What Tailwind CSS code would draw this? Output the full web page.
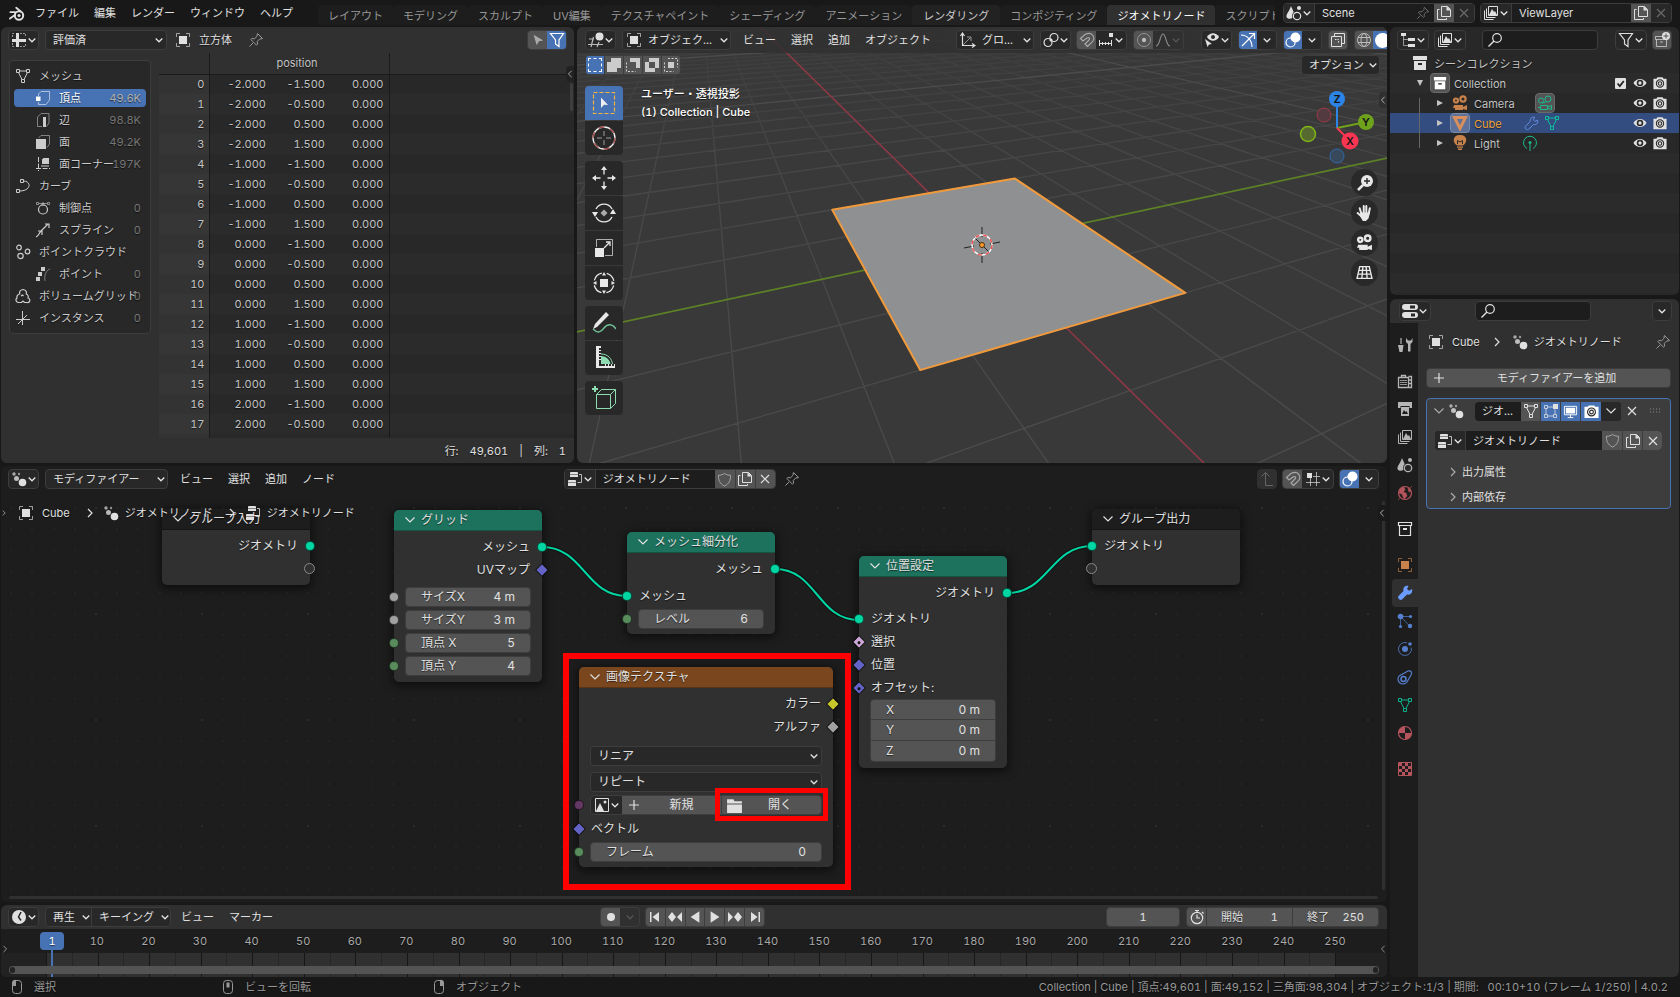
<!DOCTYPE html>
<html lang="ja">
<head>
    <meta charset="UTF-8">
    <meta name="viewport" content="width=device-width, initial-scale=1.0">
    <title>Blender - ジオメトリノード</title>
    <script src="https://cdn.jsdelivr.net/npm/@tailwindcss/browser@4"></script>
</head>
<body class="flex h-screen flex-col overflow-hidden bg-[#181818] font-['Inter','Noto_Sans_CJK_JP',sans-serif] text-[11px] leading-4 text-[#e0e0e0] tabular-nums [text-shadow:0_1px_1px_rgb(0_0_0/0.6)]">

<!-- Icon set -->
<svg class="hidden" fill="none" stroke="currentColor">
    <symbol id="i-blender" viewBox="0 0 16 16"><g fill="none" stroke="currentColor"><circle cx="10" cy="9.5" r="4.2" stroke-width="2"/><path d="M6 6.2h-4.6M11.5 5.2L7.2 1.8M6.2 8.8L1 12.6" stroke-width="1.8" stroke-linecap="round"/></g><circle cx="10" cy="9.5" r="1.6" fill="currentColor"/></symbol>
    <symbol id="i-chev" viewBox="0 0 10 10"><path d="M1.700 3.500L5 6.800l3.300-3.300" fill="none" stroke="currentColor" stroke-width="1.300"/></symbol>
    <symbol id="i-fold" viewBox="0 0 12 12"><path d="M1.500 3.500L6 8l4.500-4.500" fill="none" stroke="currentColor" stroke-width="1.200"/></symbol>
    <symbol id="i-right" viewBox="0 0 10 10"><path d="M3 1l4 4-4 4" fill="none" stroke="currentColor" stroke-width="1.200"/></symbol>
    <symbol id="i-left" viewBox="0 0 10 10"><path d="M7 1L3 5l4 4" fill="none" stroke="currentColor" stroke-width="1.200"/></symbol>
    <symbol id="i-close" viewBox="0 0 16 16"><path d="M4 4l8 8M12 4l-8 8" fill="none" stroke="currentColor" stroke-width="1.200"/></symbol>
    <symbol id="i-plus" viewBox="0 0 16 16"><path d="M8 3v10M3 8h10" fill="none" stroke="currentColor" stroke-width="1.200"/></symbol>
    <symbol id="i-object" viewBox="0 0 16 16"><path d="M1.500 5V1.500h3.500M11 1.500h3.500V5M14.500 11v3.500H11M5 14.500H1.500V11" fill="none" stroke="currentColor" opacity=".65"/><rect x="4" y="4" width="8" height="8" fill="currentColor"/></symbol>
    <symbol id="i-pin" viewBox="0 0 16 16"><path d="M9.500 1.500l5 5-1.500.5-1-.3-2.700 2.700.2 2.800-1 1-5.700-5.700 1-1 2.800.2L9.300 4l-.3-1zM5 11l-3.500 3.500" fill="none" stroke="currentColor"/></symbol>
    <symbol id="i-copy" viewBox="0 0 16 16"><path d="M5.500 1.500h6l3 3v7h-9zM3.500 4.500h-2v10h9v-1.500" fill="none" stroke="currentColor"/><path d="M10.500 1v4.500H15z" fill="currentColor"/></symbol>
    <symbol id="i-mesh" viewBox="0 0 16 16"><path d="M1.500 1.500h3v3h-3zM11.500 1.500h3v3h-3zM6.500 11.500h3v3h-3zM4.500 3h7M3.500 4.500l3.500 7M12.500 4.500L9 11.500" fill="none" stroke="currentColor"/></symbol>
    <symbol id="i-vert" viewBox="0 0 16 16"><path d="M3.500 6V4l2.500-2.500h8.500V10l-3.500 4.500H3.500V12" fill="none" stroke="currentColor" opacity=".55"/><rect x="1" y="6.500" width="4.500" height="4.500" fill="currentColor"/></symbol>
    <symbol id="i-edge" viewBox="0 0 16 16"><path d="M7 14.500H2.500V5L6 1.500h8V11l-2.500 3.500" fill="none" stroke="currentColor" opacity=".55"/><rect x="8" y="5" width="3" height="10" fill="currentColor"/></symbol>
    <symbol id="i-face" viewBox="0 0 16 16"><path d="M3.500 4L6 1.500h8.500V10L12 13.500" fill="none" stroke="currentColor" opacity=".55"/><rect x="1" y="5" width="10" height="10" fill="currentColor"/></symbol>
    <symbol id="i-corner" viewBox="0 0 16 16"><path d="M3.500 1v14M1 12.500h14" fill="none" stroke="currentColor" stroke-dasharray="5 1.500"/><path d="M7 8V3.500L8.500 2H14v6z" fill="currentColor"/><path d="M6 10h8" stroke="currentColor"/></symbol>
    <symbol id="i-curve" viewBox="0 0 16 16"><path d="M5.500 1.500h3v3h-3zM1.500 11.500h3v3h-3zM8.500 3c8 0 8 10-4 10" fill="none" stroke="currentColor"/></symbol>
    <symbol id="i-ctrl" viewBox="0 0 16 16"><circle cx="8" cy="9.500" r="4.500" fill="none" stroke="currentColor" stroke-width="1.200"/><path d="M1.500 2.500h2v2h-2zM12.500 2.500h2v2h-2zM7 3h2v2H7zM4 3.500h8" fill="none" stroke="currentColor" opacity=".6"/></symbol>
    <symbol id="i-spline" viewBox="0 0 16 16"><path d="M1 15c3-1 3-4 5-6l7-7M10 2h4v4M3 9h4v4" fill="none" stroke="currentColor" stroke-width="1.200"/></symbol>
    <symbol id="i-cloud" viewBox="0 0 16 16"><g fill="none" stroke="currentColor" stroke-width="1.200"><circle cx="4" cy="3.500" r="2.300"/><circle cx="12.500" cy="7.500" r="2.300"/><circle cx="5.500" cy="12" r="2.700"/></g></symbol>
    <symbol id="i-points" viewBox="0 0 16 16"><path d="M6 1h4v4H6zM3 6h4v4H3zM1 11h4v4H1z" fill="currentColor"/><path d="M15 3c-4 1-6 7-5 12" fill="none" stroke="currentColor" opacity=".5"/></symbol>
    <symbol id="i-volume" viewBox="0 0 16 16"><path d="M8 1.500a3.500 3.500 0 0 1 3.300 4.500 3 3 0 0 1 1.700 4 2.300 2.300 0 0 1-1 4.500H9.500L8 13l-1.500 1.500H3.500a2.500 2.500 0 0 1-1.500-4.500 3.200 3.200 0 0 1 2.700-4A3.500 3.500 0 0 1 8 1.500zM6 8l1.500-1 1 1" fill="none" stroke="currentColor" stroke-width="1.200"/></symbol>
    <symbol id="i-axes" viewBox="0 0 16 16"><path d="M7.500 1v14M1 9.500h14M3 14l9-9" fill="none" stroke="currentColor"/></symbol>
    <symbol id="i-sheet" viewBox="0 0 16 16"><path d="M1 7h14v3H1z M5 1h3v14H5z" fill="currentColor"/><path d="M1.500 5V1.500H4M9 1.500h5.500V5M1.500 11v3.500H4M9 14.500h5.500V11" fill="none" stroke="currentColor" opacity=".6" stroke-dasharray="2 1"/></symbol>
    <symbol id="i-arrow" viewBox="0 0 16 16"><path d="M3 2l11 6.500-5 .8L6.500 14z" fill="currentColor"/></symbol>
    <symbol id="i-funnel" viewBox="0 0 16 16"><path d="M1.500 1.500h13L10 8v6.500L6.500 12V8z" fill="none" stroke="currentColor" stroke-width="1.200"/></symbol>
    <symbol id="i-search" viewBox="0 0 16 16"><circle cx="10" cy="6" r="4.300" fill="none" stroke="currentColor" stroke-width="1.200"/><path d="M7 9l-5.500 5.500" stroke="currentColor" stroke-width="1.400"/></symbol>
    <symbol id="i-view3d" viewBox="0 0 16 16"><circle cx="11.500" cy="4.500" r="4" fill="currentColor"/><path d="M1 7h5M0 12.500h15M5.500 5L3 15M11 10l-2 5" fill="none" stroke="currentColor" stroke-width="1.200" opacity=".8"/></symbol>
    <symbol id="i-orient" viewBox="0 0 16 16"><path d="M2.500 2v11.500H14M.5 4l2-3 2 3M12 11.500l3 2-3 2" fill="none" stroke="currentColor" stroke-width="1.200"/><path d="M3 13l7-7M7 5h4v4" fill="none" stroke="currentColor" opacity=".6"/></symbol>
    <symbol id="i-pivot" viewBox="0 0 16 16"><g fill="none" stroke="currentColor" stroke-width="1.200"><circle cx="5" cy="10.500" r="4"/><circle cx="11" cy="5.500" r="4"/></g><circle cx="8" cy="8" r="1.500" fill="currentColor"/></symbol>
    <symbol id="i-magnet" viewBox="0 0 16 16"><path d="M1.500 6.500L6 2.500c8-4 12 5 5.500 9l-3 3-2.500-2.500 3-3c3-2.500 1-4.500-1-3L4 9z" fill="none" stroke="currentColor" stroke-width="1.200"/></symbol>
    <symbol id="i-snapinc" viewBox="0 0 16 16"><path d="M1.500 8v6M4.500 10v3M7.500 10v3M10.500 10v3M13.500 8v6M1 11.500h13" fill="none" stroke="currentColor"/><path d="M11 1h4v4h-4z" fill="currentColor"/></symbol>
    <symbol id="i-prop" viewBox="0 0 16 16"><circle cx="8" cy="8" r="6.500" fill="none" stroke="currentColor" opacity=".6"/><circle cx="8" cy="8" r="2.200" fill="currentColor"/></symbol>
    <symbol id="i-falloff" viewBox="0 0 16 16"><path d="M1 14c4 0 4-12 7-12s3 12 7 12" fill="none" stroke="currentColor" stroke-width="1.200"/></symbol>
    <symbol id="i-eye" viewBox="0 0 16 16"><path d="M.5 8C4 1.800 12 1.800 15.500 8 12 14.200 4 14.200.5 8z" fill="currentColor"/><circle cx="8" cy="8" r="3.700" fill="#282828"/><circle cx="8" cy="8" r="1.900" fill="currentColor"/></symbol>
    <symbol id="i-visible" viewBox="0 0 16 16"><path d="M3 5c3-5 9-5 12 0-3 5-9 5-12 0z" fill="currentColor"/><circle cx="9" cy="5" r="2" fill="#282828"/><path d="M1 7l7 5-3 .5L3.500 15z" fill="currentColor"/></symbol>
    <symbol id="i-gizmo" viewBox="0 0 16 16"><path d="M1 3c6 0 11 5 11 12M2 14L14 2M9 1.500h5.500V7" fill="none" stroke="currentColor" stroke-width="1.200"/></symbol>
    <symbol id="i-overlay" viewBox="0 0 16 16"><circle cx="10.500" cy="5.500" r="5" fill="currentColor"/><circle cx="5.500" cy="10.500" r="4.500" fill="none" stroke="currentColor" stroke-width="1.200"/></symbol>
    <symbol id="i-xray" viewBox="0 0 16 16"><path d="M4.500 1.500h10v10h-3M1.500 4.500h10v10h-10zM4.500 4.500v-3" fill="none" stroke="currentColor"/><path d="M5 7.500h3.500V11" fill="none" stroke="currentColor" stroke-dasharray="1.500 1"/></symbol>
    <symbol id="i-globe" viewBox="0 0 16 16"><g fill="none" stroke="currentColor"><circle cx="8" cy="8" r="6.500"/><ellipse cx="8" cy="8" rx="3" ry="6.500"/><path d="M2 5.500h12M2 10.500h12"/></g></symbol>
    <symbol id="i-scene" viewBox="0 0 16 16"><path d="M5 1c1.500 4 4 7 3 10-.5 3-6.500 4-7.500 1C0 9 3.500 6 5 1z" fill="currentColor"/><circle cx="13" cy="3" r="2" fill="currentColor"/><circle cx="11" cy="11" r="5" fill="#282828"/><circle cx="11" cy="11" r="3.700" fill="none" stroke="currentColor" stroke-width="1.200"/></symbol>
    <symbol id="i-layers" viewBox="0 0 16 16"><path d="M5.500 1.500h9v9h-9zM3.500 3.500v9h9M1.500 5.500v9h9" fill="none" stroke="currentColor"/><path d="M6 10l3-6 2 3 1-1 2 4z" fill="currentColor"/></symbol>
    <symbol id="i-image" viewBox="0 0 16 16"><path d="M1.500 1.500h13v13h-13z" fill="none" stroke="currentColor"/><path d="M2 14l4-8 4 8z" fill="currentColor"/><circle cx="11" cy="5" r="1.500" fill="currentColor"/></symbol>
    <symbol id="i-tree" viewBox="0 0 16 16"><path d="M1 1h5v3H1zM8 6h7v3H8zM8 12h7v3H8z" fill="currentColor"/><path d="M3.500 4v9.500H8M3.500 7.500H8" fill="none" stroke="currentColor" opacity=".6"/></symbol>
    <symbol id="i-box" viewBox="0 0 16 16"><path d="M1 1h14v4H1zM2 6h12v9H2zM6 8v2h4V8z" fill="currentColor" fill-rule="evenodd"/></symbol>
    <symbol id="i-boxline" viewBox="0 0 16 16"><path d="M1.500 1.500h13v3h-13zM2.500 4.500h11v10h-11z" fill="none" stroke="currentColor" stroke-width="1.200"/><path d="M6 7h4v2H6z" fill="currentColor"/></symbol>
    <symbol id="i-newcol" viewBox="0 0 16 16"><path d="M8 4.500H1.500v3h12M2.500 7.500v7h10v-7M6 10h3" fill="none" stroke="currentColor" opacity=".7"/><circle cx="12" cy="4" r="4" fill="currentColor"/><path d="M12 1.500v5M9.500 4h5" stroke="#545454"/></symbol>
    <symbol id="i-camera" viewBox="0 0 16 16"><path d="M2 10h9v2l4-2v5l-4-1v1H3v-2H1z" fill="currentColor"/><g fill="none" stroke="currentColor" stroke-width="2.200"><circle cx="4" cy="5.500" r="2"/><circle cx="11" cy="4" r="2.600"/></g></symbol>
    <symbol id="i-cameraline" viewBox="0 0 16 16"><g fill="none" stroke="currentColor"><path d="M3.500 10.500h7v4h-7zM10.500 12l4-1.500v4l-4-1.500M1 12.500h2.500M5 8l4-1"/><circle cx="4" cy="5.500" r="2.500"/><circle cx="11" cy="4" r="3"/></g></symbol>
    <symbol id="i-cubeobj" viewBox="0 0 16 16"><path d="M2.500 2.500h11L8 13.500z" fill="none" stroke="currentColor" stroke-width="3"/></symbol>
    <symbol id="i-bulb" viewBox="0 0 16 16"><path d="M8 0C0 0 .5 8 5 10.500h6C15.500 8 16 0 8 0zM5 11.500h6v1.200H5zM6 13.500h4V15H6z" fill="currentColor"/><path d="M5.500 9V5.500L8 7l2.500-1.500V9" fill="none" stroke="#282828"/></symbol>
    <symbol id="i-lightdata" viewBox="0 0 16 16"><path d="M5 13.500a6.500 6.500 0 1 1 6 0M8 9v7" fill="none" stroke="currentColor"/><circle cx="8" cy="7.500" r="1.500" fill="currentColor"/></symbol>
    <symbol id="i-wrench" viewBox="0 0 16 16"><path d="M14.500 4.500l-2.800 1.300-1.700-1.700L11.300 1.300C8.500.5 6 2.800 6.700 5.900L1.500 11c-1.200 2 1.200 4.400 3.300 3.300l5.200-5.200c3 .7 5.600-1.600 4.500-4.600z" fill="none" stroke="currentColor"/></symbol>
    <symbol id="i-wrenchfill" viewBox="0 0 16 16"><path d="M15 4l-3 1.800L10 4l1.500-3C8 0 5.500 3 6.500 6L1.500 11c-1.500 2 1.500 5 3.500 3.500l5-5c3.500.8 6-2 5-5.500z" fill="currentColor"/></symbol>
    <symbol id="i-render" viewBox="0 0 16 16"><path d="M.5 3H4l1-1.500h6L12 3h3.500v12H.5z" fill="currentColor"/><circle cx="8" cy="8.500" r="4.200" fill="none" stroke="#282828" stroke-width="1.200"/><circle cx="8" cy="8.500" r="2" fill="none" stroke="#282828" stroke-width="1.200"/></symbol>
    <symbol id="i-tool" viewBox="0 0 16 16"><path d="M4 1v6" stroke="currentColor" stroke-width="1.200"/><path d="M1 8h5.500l-1 7h-3z" fill="currentColor"/><path d="M9 1v4l2 2v7.500h2.500V7l2-2V1l-1.500 2.500h-3z" fill="currentColor"/></symbol>
    <symbol id="i-back" viewBox="0 0 16 16"><path d="M1.500 4.500h10v10h-10zM4.500 4.500v-2h4v2M11.500 3.500h3v11h-3M11.500 7h3M11.500 10.500h3" fill="none" stroke="currentColor" stroke-width="1.300"/><path d="M3 7.500h7M3 9.500h7M3 11.500h7" stroke="currentColor" stroke-width=".8"/></symbol>
    <symbol id="i-printer" viewBox="0 0 16 16"><path d="M1 1h14v6h-2.500V5h-9v2H1zM4 6h8v9H4z" fill="currentColor"/><path d="M5 13l2-4 1.500 2 1-1L11 13z" fill="#1d1d1d"/></symbol>
    <symbol id="i-world" viewBox="0 0 16 16"><circle cx="8" cy="8" r="6.500" fill="none" stroke="currentColor" stroke-width="1.200"/><path d="M3 4l4-2 1 3-2 2 3 1 1 3-3 3-2-5-3-1zM11 3l3 3-2 1zM1 15l2-2M13 3l2-2" fill="currentColor" stroke="currentColor" stroke-width=".6"/></symbol>
    <symbol id="i-particle" viewBox="0 0 16 16"><path d="M3.500 4v9M5 3.500h8M5 5l8 8.500" fill="none" stroke="currentColor" opacity=".7"/><circle cx="3.500" cy="3.500" r="2.800" fill="currentColor"/><circle cx="3.500" cy="13.500" r="1.600" fill="currentColor"/><circle cx="13.500" cy="3.500" r="1.600" fill="currentColor"/><circle cx="13" cy="13" r="2.200" fill="currentColor"/></symbol>
    <symbol id="i-physics" viewBox="0 0 16 16"><path d="M10 1.800a6.500 6.500 0 1 0 4.300 4.700" fill="none" stroke="currentColor" opacity=".8"/><circle cx="8" cy="8" r="3" fill="currentColor"/><circle cx="13" cy="3" r="1.800" fill="currentColor"/></symbol>
    <symbol id="i-constraint" viewBox="0 0 16 16"><path d="M2 7L11 2c3-1 4.500 2 3 4l-4 7a5 5 0 1 1-8-6z" fill="none" stroke="currentColor" stroke-width="1.200"/><circle cx="6.500" cy="10" r="2.500" fill="none" stroke="currentColor" stroke-width="1.500"/></symbol>
    <symbol id="i-material" viewBox="0 0 16 16"><circle cx="8" cy="8" r="6.500" fill="none" stroke="currentColor" stroke-width="1.200"/><path d="M8 8V1.500A6.500 6.500 0 0 0 1.500 8zM8 8v6.500A6.500 6.500 0 0 0 14.500 8z" fill="currentColor"/></symbol>
    <symbol id="i-texture" viewBox="0 0 16 16"><path d="M1.500 1.500h13v13h-13z" fill="none" stroke="currentColor"/><path d="M2 2h3v3H2zM8 2h3v3H8zM5 5h3v3H5zM11 5h3v3h-3zM2 8h3v3H2zM8 8h3v3H8zM5 11h3v3H5zM11 11h3v3h-3z" fill="currentColor"/></symbol>
    <symbol id="i-nodes" viewBox="0 0 16 16"><g fill="currentColor"><circle cx="3" cy="3" r="1.700" opacity=".7"/><circle cx="8" cy="3" r="1.200" opacity=".6"/><circle cx="5.500" cy="7.500" r="2.500" opacity=".8"/><circle cx="11.500" cy="11.500" r="3.800"/></g></symbol>
    <symbol id="i-nodetree" viewBox="0 0 16 16"><path d="M4 1h6a1 1 0 0 1 1 1v4H3V2a1 1 0 0 1 1-1zM2 9h6a1 1 0 0 1 1 1v5H1v-5a1 1 0 0 1 1-1z" fill="currentColor"/><path d="M3 3.500h8M1 11.500h8" stroke="#282828" opacity=".5"/><path d="M12 3.500h2.500v8H10.500" fill="none" stroke="currentColor" opacity=".8"/></symbol>
    <symbol id="i-shield" viewBox="0 0 16 16"><path d="M8 1.500c2 1.500 4 2 6.500 2 0 5.500-1.500 9-6.500 11.500-5-2.500-6.500-6-6.500-11.500 2.500 0 4.500-.5 6.500-2z" fill="none" stroke="currentColor"/></symbol>
    <symbol id="i-editmode" viewBox="0 0 16 16"><path d="M1.500 2.500h3v3h-3zM1.500 11.500h3v3h-3zM10.500 11.500h3v3h-3zM4.500 4H10M3 5.500v6M4.500 13h6M12 6.500v5" fill="none" stroke="currentColor" opacity=".8"/><path d="M10 1h5v5h-5z" fill="currentColor"/></symbol>
    <symbol id="i-screen" viewBox="0 0 16 16"><path d="M1.500 2.500h13v9h-13zM8 11.500V14M5 14.500h6" fill="none" stroke="currentColor"/><path d="M3 4h10v6H3z" fill="currentColor"/></symbol>
    <symbol id="i-props" viewBox="0 0 16 16"><path d="M3 1h10a2 2 0 0 1 0 6H3a2 2 0 0 1 0-6zM3 9h10a2 2 0 0 1 0 6H3a2 2 0 0 1 0-6z" fill="currentColor"/><path d="M8 2.500h5v3H8zM9 10.500h4v3H9z" fill="#282828"/></symbol>
    <symbol id="i-parent" viewBox="0 0 16 16"><path d="M6.500 1.500v13H14M2.500 5.500l4-4 4 4" fill="none" stroke="currentColor"/></symbol>
    <symbol id="i-snapgrid" viewBox="0 0 16 16"><path d="M5.500 6v9M11.500 1v14M8 5.500h7M1 11.500h14" fill="none" stroke="currentColor" opacity=".7"/><path d="M2 2h5v5H2z" fill="currentColor"/></symbol>
    <symbol id="i-folder" viewBox="0 0 16 16"><path d="M1 2h6l1 2h7v2H1zM1 7h14v8H1z" fill="currentColor"/></symbol>
    <symbol id="i-clock" viewBox="0 0 16 16"><circle cx="8" cy="8" r="7" fill="currentColor"/><path d="M10 3L7.500 8l2.500 3.500" fill="none" stroke="#282828" stroke-width="1.500"/></symbol>
    <symbol id="i-timer" viewBox="0 0 16 16"><circle cx="8" cy="9" r="5.700" fill="none" stroke="currentColor" stroke-width="1.200"/><path d="M8 5.500V9h3M6 1.500h4M8 1.500v2M13 3l1.500 1.500" fill="none" stroke="currentColor" stroke-width="1.200"/></symbol>
    <symbol id="i-dot" viewBox="0 0 16 16"><circle cx="8" cy="8" r="4" fill="currentColor"/></symbol>
    <symbol id="i-first" viewBox="0 0 16 16"><path d="M3 3h1.500v10H3zM12 3v10L5.500 8z" fill="currentColor"/></symbol>
    <symbol id="i-prevkey" viewBox="0 0 16 16"><path d="M5 3l4 5-4 5-4-5zM15 3v10l-5-5z" fill="currentColor"/></symbol>
    <symbol id="i-rev" viewBox="0 0 16 16"><path d="M13 1.500v13L3 8z" fill="currentColor"/></symbol>
    <symbol id="i-mouse-l" viewBox="0 0 16 16"><rect x="3.500" y="1.500" width="9" height="13" rx="3" fill="none" stroke="currentColor"/><path d="M3 7V4a3 3 0 0 1 4-3v6z" fill="currentColor"/></symbol>
    <symbol id="i-mouse-m" viewBox="0 0 16 16"><rect x="3.500" y="1.500" width="9" height="13" rx="3" fill="none" stroke="currentColor"/><rect x="6.500" y="3.500" width="3" height="5" fill="currentColor"/></symbol>
</svg>

<!-- Top bar -->
<header class="flex h-[27px] shrink-0 items-start pl-[9px] pr-2">
    <svg class="mt-[6px] size-4 shrink-0"><use href="#i-blender"/></svg>
    <nav class="ml-[10px] mt-[5px] flex shrink-0 gap-[15px] whitespace-nowrap">
        <button>ファイル</button><button>編集</button><button>レンダー</button><button>ウィンドウ</button><button>ヘルプ</button>
    </nav>
    <div class="ml-[25px] mt-[5px] flex h-5 min-w-0 flex-1 overflow-hidden whitespace-nowrap text-[#989898]">
        <button class="shrink-0 rounded-t bg-[#1d1d1d] px-[10px] pt-px">レイアウト</button>
        <button class="shrink-0 rounded-t bg-[#1d1d1d] px-[10px] pt-px">モデリング</button>
        <button class="shrink-0 rounded-t bg-[#1d1d1d] px-[10px] pt-px">スカルプト</button>
        <button class="shrink-0 rounded-t bg-[#1d1d1d] px-[10px] pt-px">UV編集</button>
        <button class="shrink-0 rounded-t bg-[#1d1d1d] px-[10px] pt-px">テクスチャペイント</button>
        <button class="shrink-0 rounded-t bg-[#1d1d1d] px-[10px] pt-px">シェーディング</button>
        <button class="shrink-0 rounded-t bg-[#1d1d1d] px-[10px] pt-px">アニメーション</button>
        <button class="shrink-0 rounded-t bg-[#222222] px-[11px] pt-px text-[#cccccc]">レンダリング</button>
        <button class="shrink-0 rounded-t bg-[#1d1d1d] px-[10px] pt-px">コンポジティング</button>
        <button class="shrink-0 rounded-t bg-[#303030] px-[10px] pt-px text-white">ジオメトリノード</button>
        <button class="shrink-0 rounded-t bg-[#1d1d1d] px-[10px] pt-px">スクリプト作成</button>
    </div>
    <div class="ml-2 mt-[3px] flex h-5 w-[192px] shrink-0 overflow-hidden rounded border border-[#3d3d3d] bg-[#1d1d1d]">
        <button class="flex w-[31px] items-center justify-center border-r border-[#3d3d3d] bg-[#282828]" aria-label="シーン"><svg class="size-4"><use href="#i-scene"/></svg><svg class="size-[10px]"><use href="#i-chev"/></svg></button>
        <input class="min-w-0 flex-1 px-[7px] outline-none" value="Scene" aria-label="シーン名">
        <button class="px-1 text-[#777777]" aria-label="ピン"><svg class="size-[14px]"><use href="#i-pin"/></svg></button>
        <button class="flex w-5 items-center justify-center bg-[#545454]" aria-label="新規シーン"><svg class="size-4"><use href="#i-copy"/></svg></button>
        <button class="flex w-5 items-center justify-center bg-[#282828] text-[#6a6a6a]" aria-label="シーン削除"><svg class="size-4"><use href="#i-close"/></svg></button>
    </div>
    <div class="ml-[5px] mt-[3px] flex h-5 w-[192px] shrink-0 overflow-hidden rounded border border-[#3d3d3d] bg-[#1d1d1d]">
        <button class="flex w-[31px] items-center justify-center border-r border-[#3d3d3d] bg-[#282828]" aria-label="ビューレイヤー"><svg class="size-4"><use href="#i-layers"/></svg><svg class="size-[10px]"><use href="#i-chev"/></svg></button>
        <input class="min-w-0 flex-1 px-[7px] outline-none" value="ViewLayer" aria-label="ビューレイヤー名">
        <button class="flex w-5 items-center justify-center bg-[#545454]" aria-label="新規レイヤー"><svg class="size-4"><use href="#i-copy"/></svg></button>
        <button class="flex w-5 items-center justify-center bg-[#282828] text-[#6a6a6a]" aria-label="レイヤー削除"><svg class="size-4"><use href="#i-close"/></svg></button>
    </div>
</header>

<main class="flex min-h-0 flex-1 gap-[3px] px-px">
    <div class="flex min-w-0 flex-1 flex-col gap-[3px]">
        <div class="flex min-h-0 flex-1 gap-[3px]">

            <!-- Spreadsheet -->
            <section class="relative flex min-w-0 flex-[573] basis-0 flex-col overflow-hidden rounded-md bg-[#303030]">
                <div class="flex h-[26px] shrink-0 items-center px-[7px]">
                    <button class="flex h-5 w-[31px] items-center justify-center rounded border border-[#3d3d3d] bg-[#282828]" aria-label="エディタータイプ"><svg class="size-4"><use href="#i-sheet"/></svg><svg class="size-[10px]"><use href="#i-chev"/></svg></button>
                    <div class="relative ml-[6px] h-5 w-[122px] rounded border border-[#3d3d3d] bg-[#282828]">
                        <select class="block h-full w-full appearance-none px-[7px] outline-none" aria-label="評価状態"><option>評価済</option></select>
                        <svg class="pointer-events-none absolute right-[2px] top-1 size-[10px]"><use href="#i-chev"/></svg>
                    </div>
                    <svg class="ml-2 size-4"><use href="#i-object"/></svg>
                    <span class="ml-2">立方体</span>
                    <button class="ml-4 text-[#999999]" aria-label="ピン"><svg class="size-4"><use href="#i-pin"/></svg></button>
                    <div class="ml-auto flex h-5 overflow-hidden rounded border border-[#3d3d3d]">
                        <button class="flex w-[19px] items-center justify-center bg-[#545454] text-[#aaaaaa]" aria-label="選択のみ"><svg class="size-[14px]"><use href="#i-arrow"/></svg></button>
                        <button class="flex w-[19px] items-center justify-center bg-[#4772b3] text-white" aria-label="フィルター"><svg class="size-4"><use href="#i-funnel"/></svg></button>
                    </div>
                </div>
                <div class="flex min-h-0 flex-1">
                    <ul class="ml-2 mt-[7px] h-[274px] w-[142px] shrink-0 rounded border border-[#3d3d3d] bg-[#282828] py-1 text-[#cccccc]">
                        <li class="flex h-[22px] items-center px-[5px]"><svg class="size-4"><use href="#i-mesh"/></svg><span class="ml-2">メッシュ</span></li>
                        <li class="flex h-[22px] items-center px-1"><div class="flex h-[18px] flex-1 items-center rounded-sm bg-[#4772b3] px-[5px] text-white"><svg class="ml-4 size-4"><use href="#i-vert"/></svg><span class="ml-2">頂点</span><span class="ml-auto text-[#b0b0b0]">49.6K</span></div></li>
                        <li class="flex h-[22px] items-center px-[9px]"><svg class="ml-4 size-4"><use href="#i-edge"/></svg><span class="ml-2">辺</span><span class="ml-auto text-[#777777]">98.8K</span></li>
                        <li class="flex h-[22px] items-center px-[9px]"><svg class="ml-4 size-4"><use href="#i-face"/></svg><span class="ml-2">面</span><span class="ml-auto text-[#777777]">49.2K</span></li>
                        <li class="flex h-[22px] items-center whitespace-nowrap px-[9px]"><svg class="ml-4 size-4 shrink-0"><use href="#i-corner"/></svg><span class="ml-2 w-0">面コーナー</span><span class="ml-auto text-[#777777]">197K</span></li>
                        <li class="flex h-[22px] items-center px-[5px]"><svg class="size-4"><use href="#i-curve"/></svg><span class="ml-2">カーブ</span></li>
                        <li class="flex h-[22px] items-center px-[9px]"><svg class="ml-4 size-4"><use href="#i-ctrl"/></svg><span class="ml-2">制御点</span><span class="ml-auto text-[#777777]">0</span></li>
                        <li class="flex h-[22px] items-center px-[9px]"><svg class="ml-4 size-4"><use href="#i-spline"/></svg><span class="ml-2">スプライン</span><span class="ml-auto text-[#777777]">0</span></li>
                        <li class="flex h-[22px] items-center px-[5px]"><svg class="size-4"><use href="#i-cloud"/></svg><span class="ml-2">ポイントクラウド</span></li>
                        <li class="flex h-[22px] items-center px-[9px]"><svg class="ml-4 size-4"><use href="#i-points"/></svg><span class="ml-2">ポイント</span><span class="ml-auto text-[#777777]">0</span></li>
                        <li class="flex h-[22px] items-center whitespace-nowrap pl-[5px] pr-[9px]"><svg class="size-4 shrink-0"><use href="#i-volume"/></svg><span class="ml-2 w-0">ボリュームグリッド</span><span class="ml-auto text-[#777777]">0</span></li>
                        <li class="flex h-[22px] items-center pl-[5px] pr-[9px]"><svg class="size-4"><use href="#i-axes"/></svg><span class="ml-2">インスタンス</span><span class="ml-auto text-[#777777]">0</span></li>
                    </ul>
                    <div class="ml-2 min-w-0 flex-1 overflow-hidden">
                        <table class="w-full table-fixed border-collapse text-right text-[#c3c3c3]">
                            <colgroup><col class="w-[50px]"><col class="w-[60px]"><col class="w-[60px]"><col class="w-[60px]"><col></colgroup>
                            <thead>
                                <tr class="h-[21px] border-b border-[#1a1a1a] bg-[#303030]">
                                    <th class="border-r border-[#1a1a1a]"></th>
                                    <th colspan="3" class="border-r border-[#1a1a1a] pr-1 text-center font-normal">position</th>
                                    <th></th>
                                </tr>
                            </thead>
                            <tbody id="rows"></tbody>
                        </table>
                    </div>
                </div>
                <div class="flex h-[25px] shrink-0 items-center justify-end gap-[11px] bg-[#303030] pr-2"><span>行:</span><span>49,601</span><span>|</span><span>列:</span><span>1</span></div>
                <div class="absolute right-0 top-[39px] flex h-4 w-2 items-center rounded-l bg-[#222222]"><svg class="size-2 text-[#aaaaaa]"><use href="#i-left"/></svg></div>
                <div class="absolute right-px top-14 h-7 w-[3px] rounded bg-[#3d3d3d]"></div>
            </section>

            <!-- 3D viewport -->
            <section class="relative flex min-w-0 flex-[810] basis-0 flex-col overflow-hidden rounded-md bg-[#393939]">
                <svg class="absolute inset-0 h-full w-full" viewBox="-405 -218 810 436" preserveAspectRatio="xMidYMid slice" fill="none">
                    <defs>
                        <linearGradient id="fade" x1="0" y1="-218" x2="0" y2="218" gradientUnits="userSpaceOnUse">
                            <stop offset="0.050" stop-color="#3e3e3e"/><stop offset="0.300" stop-color="#474747"/><stop offset="1" stop-color="#4b4b4b"/>
                        </linearGradient>
                    </defs>
                    <path id="minor" stroke="url(#fade)" stroke-width="1.300"/>
                    <path id="major" stroke="#4b4b4b" stroke-width="1.300"/>
                    <path id="axisX" stroke="#8a3846" stroke-width="1.700"/>
                    <path id="axisY" stroke="#5d8226" stroke-width="1.700"/>
                    <path id="plane" fill="#8f9092" stroke="#f19a3c" stroke-width="2" stroke-linejoin="round"/>
                    <path d="M0-18v10M0 8v10M-18 3l10-2M8-1l10-2M-8-8l6 6M2 2l5 5" stroke="#222222"/>
                    <circle r="10" stroke="#ffffff" stroke-width="1.300"/>
                    <circle r="10" stroke="#f04a4a" stroke-width="1.300" stroke-dasharray="4 4"/>
                    <circle r="2.500" fill="#ff9a2a" stroke="#4a3010"/>
                </svg>
                <div class="relative flex h-[26px] shrink-0 items-center whitespace-nowrap bg-[#303030]/85 pl-2">
                    <button class="flex h-5 w-[31px] shrink-0 items-center justify-center rounded border border-[#3d3d3d] bg-[#282828]" aria-label="エディタータイプ"><svg class="size-4"><use href="#i-view3d"/></svg><svg class="size-[10px]"><use href="#i-chev"/></svg></button>
                    <div class="relative ml-[6px] h-5 w-[109px] shrink-0 rounded border border-[#3d3d3d] bg-[#282828]">
                        <svg class="absolute left-[3px] top-px size-4"><use href="#i-object"/></svg>
                        <select class="block h-full w-full appearance-none pl-[25px] outline-none" aria-label="モード"><option>オブジェク...</option></select>
                        <svg class="pointer-events-none absolute right-px top-1 size-[10px]"><use href="#i-chev"/></svg>
                    </div>
                    <nav class="ml-3 flex shrink-0 gap-[15px]"><button>ビュー</button><button>選択</button><button>追加</button><button>オブジェクト</button></nav>
                    <div class="relative ml-[25px] h-5 w-[78px] shrink-0 rounded border border-[#3d3d3d] bg-[#282828]">
                        <svg class="absolute left-[3px] top-px size-4"><use href="#i-orient"/></svg>
                        <select class="block h-full w-full appearance-none pl-[25px] outline-none" aria-label="座標系"><option>グロ...</option></select>
                        <svg class="pointer-events-none absolute right-px top-1 size-[10px]"><use href="#i-chev"/></svg>
                    </div>
                    <button class="ml-[6px] flex h-5 w-[31px] shrink-0 items-center justify-center rounded border border-[#3d3d3d] bg-[#282828]" aria-label="ピボット"><svg class="size-4"><use href="#i-pivot"/></svg><svg class="size-[10px]"><use href="#i-chev"/></svg></button>
                    <div class="ml-[5px] flex h-5 w-[51px] shrink-0 overflow-hidden rounded border border-[#3d3d3d] bg-[#282828]">
                        <button class="flex w-[19px] items-center justify-center bg-[#545454] text-[#aaaaaa]" aria-label="スナップ"><svg class="size-4"><use href="#i-magnet"/></svg></button>
                        <button class="flex flex-1 items-center justify-center" aria-label="スナップ対象"><svg class="size-4"><use href="#i-snapinc"/></svg><svg class="size-[10px]"><use href="#i-chev"/></svg></button>
                    </div>
                    <div class="ml-[6px] flex h-5 w-[51px] shrink-0 overflow-hidden rounded border border-[#3d3d3d] bg-[#303030]">
                        <button class="flex w-[19px] items-center justify-center bg-[#545454] text-[#bbbbbb]" aria-label="プロポーショナル編集"><svg class="size-4"><use href="#i-prop"/></svg></button>
                        <button class="flex flex-1 items-center justify-center text-[#8a8a8a]" aria-label="減衰"><svg class="size-4"><use href="#i-falloff"/></svg><svg class="size-[10px] text-[#555555]"><use href="#i-chev"/></svg></button>
                    </div>
                    <span class="flex-1"></span>
                    <button class="flex h-5 w-[31px] shrink-0 items-center justify-center rounded border border-[#3d3d3d] bg-[#282828]" aria-label="表示タイプ"><svg class="size-4"><use href="#i-visible"/></svg><svg class="size-[10px]"><use href="#i-chev"/></svg></button>
                    <div class="ml-[6px] flex h-5 w-[39px] shrink-0 overflow-hidden rounded border border-[#3d3d3d] bg-[#282828]">
                        <button class="flex w-[18px] items-center justify-center bg-[#4772b3] text-white" aria-label="ギズモ"><svg class="size-4"><use href="#i-gizmo"/></svg></button>
                        <button class="flex flex-1 items-center justify-center" aria-label="ギズモ設定"><svg class="size-[10px]"><use href="#i-chev"/></svg></button>
                    </div>
                    <div class="ml-[6px] flex h-5 w-[39px] shrink-0 overflow-hidden rounded border border-[#3d3d3d] bg-[#282828]">
                        <button class="flex w-[18px] items-center justify-center bg-[#4772b3] text-white" aria-label="オーバーレイ"><svg class="size-4"><use href="#i-overlay"/></svg></button>
                        <button class="flex flex-1 items-center justify-center" aria-label="オーバーレイ設定"><svg class="size-[10px]"><use href="#i-chev"/></svg></button>
                    </div>
                    <button class="ml-[6px] flex h-5 w-5 shrink-0 items-center justify-center rounded border border-[#3d3d3d] bg-[#545454]" aria-label="透過表示"><svg class="size-4"><use href="#i-xray"/></svg></button>
                    <div class="ml-[6px] flex h-5 w-[33px] shrink-0 overflow-hidden rounded-l border-y border-l border-[#3d3d3d]">
                        <button class="flex w-[18px] shrink-0 items-center justify-center bg-[#545454] text-[#bbbbbb]" aria-label="ワイヤーフレーム"><svg class="size-4"><use href="#i-globe"/></svg></button>
                        <button class="flex w-5 shrink-0 items-center bg-[#4772b3] pl-[2px]" aria-label="ソリッド"><span class="size-[15px] rounded-full bg-white"></span></button>
                    </div>
                </div>
                <div class="relative mt-[2px] flex items-center justify-between pl-2 pr-[7px]">
                    <div class="flex h-5 overflow-hidden rounded border border-[#3d3d3d]">
                        <button class="flex w-[18px] items-center justify-center bg-[#4772b3]" aria-label="新規選択"><span class="size-[14px] border border-dashed border-white"></span></button>
                        <button class="flex w-[19px] items-center justify-center border-l border-[#3d3d3d] bg-[#545454]" aria-label="拡張"><svg class="size-4 text-[#cccccc]" viewBox="0 0 16 16"><path d="M5 1h10v10h-4v4H1V5h4z" fill="currentColor"/></svg></button>
                        <button class="flex w-[19px] items-center justify-center border-l border-[#3d3d3d] bg-[#545454]" aria-label="減算"><svg class="size-4 text-[#cccccc]" viewBox="0 0 16 16"><path d="M5 1h10v10h-4V5H5z" fill="currentColor"/><path d="M1.500 5.500v9h9" stroke="currentColor" fill="none" stroke-dasharray="2 1.500"/></svg></button>
                        <button class="flex w-[19px] items-center justify-center border-l border-[#3d3d3d] bg-[#545454]" aria-label="反転"><svg class="size-4 text-[#cccccc]" viewBox="0 0 16 16"><path d="M5 1h10v10h-4v4H1V5h4zM5 5v6h6V5z" fill="currentColor" fill-rule="evenodd"/></svg></button>
                        <button class="flex w-[19px] items-center justify-center border-l border-[#3d3d3d] bg-[#545454]" aria-label="交差"><svg class="size-4 text-[#cccccc]" viewBox="0 0 16 16"><path d="M5 5h6v6H5z" fill="currentColor"/><path d="M5 1.500h9.500v9M1.500 5.500v9h9" stroke="currentColor" fill="none" stroke-dasharray="2 1.500"/></svg></button>
                    </div>
                    <button class="flex h-5 w-[79px] items-center justify-between rounded border border-[#3d3d3d] bg-[#282828] pl-[7px] pr-px">オプション<svg class="size-[10px]"><use href="#i-chev"/></svg></button>
                </div>
                <div class="relative flex min-h-0 flex-1 items-start pl-2">
                    <!-- Toolbar -->
                    <div class="mt-[11px] flex w-[38px] flex-col gap-[6px]">
                        <div class="flex flex-col gap-px overflow-hidden rounded">
                            <button class="flex h-[34px] items-center justify-center bg-[#4772b3]" aria-label="ボックス選択"><svg class="size-6" viewBox="0 0 24 24"><rect x="1.500" y="1.500" width="21" height="21" fill="none" stroke="#ffb43c" stroke-width="1.200" stroke-dasharray="4 2"/><path d="M9 6.500l7 7.500-4-.2L9 17z" fill="#eeeeee"/></svg></button>
                            <button class="flex h-[34px] items-center justify-center bg-[#282828]" aria-label="カーソル"><svg class="size-6" viewBox="0 0 24 24" fill="none"><circle cx="12" cy="12" r="11" stroke="#eeeeee" stroke-width="1.300"/><circle cx="12" cy="12" r="11" stroke="#a04848" stroke-width="1.300" stroke-dasharray="5.800 5.700"/><path d="M12 5v5M12 14v5M5 12h5M14 12h5" stroke="#999999"/></svg></button>
                        </div>
                        <div class="flex flex-col gap-px overflow-hidden rounded text-[#e8e8e8]">
                            <button class="flex h-[34px] items-center justify-center bg-[#282828]" aria-label="移動"><svg class="size-6" viewBox="0 0 24 24"><path d="M12 0l3 4H9zM12 24l3-4H9zM0 12l4-3v6zM24 12l-4-3v6z" fill="currentColor"/><path d="M12 4v4.500M12 15.500V20M4 12h4.500M15.500 12H20" stroke="currentColor" stroke-width="1.300"/></svg></button>
                            <button class="flex h-[34px] items-center justify-center bg-[#282828]" aria-label="回転"><svg class="size-6" viewBox="0 0 24 24"><path d="M4 8a9 9 0 0 1 16 0M4 16a9 9 0 0 0 16 0" fill="none" stroke="currentColor" stroke-width="1.400"/><path d="M12 8.500l3.500 3.500-3.500 3.500L8.500 12z" fill="#aaaaaa"/><path d="M0 11h6l-3 5zM18 13h6l-3-5z" fill="currentColor"/></svg></button>
                            <button class="flex h-[34px] items-center justify-center bg-[#282828]" aria-label="スケール"><svg class="size-6" viewBox="0 0 24 24"><path d="M4.500 11V3.500h16v16H13" fill="none" stroke="currentColor" opacity=".7"/><path d="M3 12h9v9H3z" fill="currentColor"/><path d="M12 12l5-5M14 6h4v4" fill="none" stroke="currentColor" stroke-width="1.300"/></svg></button>
                            <button class="flex h-[34px] items-center justify-center bg-[#282828]" aria-label="トランスフォーム"><svg class="size-6" viewBox="0 0 24 24"><circle cx="12" cy="12" r="10" fill="none" stroke="currentColor" stroke-width="1.300" stroke-dasharray="10.700 5" stroke-dashoffset="-2.500"/><path d="M8 8h8v8H8zM12 1l2 3.500h-4zM12 23l2-3.500h-4zM1 12l3.500-2v4zM23 12l-3.500-2v4z" fill="currentColor"/></svg></button>
                        </div>
                        <div class="flex flex-col gap-px overflow-hidden rounded text-[#e8e8e8]">
                            <button class="flex h-[34px] items-center justify-center bg-[#282828]" aria-label="アノテート"><svg class="size-6" viewBox="0 0 24 24"><path d="M1 18l2-5L14 1l3 3L5 16z" fill="currentColor"/><path d="M1 18c5 5 8 3 11-1s8-5 12 1" fill="none" stroke="#6fbf96" stroke-width="1.400"/></svg></button>
                            <button class="flex h-[34px] items-center justify-center bg-[#282828]" aria-label="メジャー"><svg class="size-6" viewBox="0 0 24 24"><path d="M4 0h5v2H7v2h2v1H7v2h2v1H7v2h2v1H7v2h2v1H7v6h6v-2h1v2h2v-2h1v2h2v-2h1v2h2v-2h1v4H4z" fill="currentColor"/><path d="M9 10c5 0 9 4 9.500 8H9z" fill="#8edcb2"/><path d="M9 8c7 0 11 5 11.500 10" fill="none" stroke="#8edcb2"/></svg></button>
                        </div>
                        <button class="flex h-[34px] items-center justify-center rounded bg-[#282828]" aria-label="立方体を追加"><svg class="size-6" viewBox="0 0 24 24" fill="none" stroke="#8edcb2"><path d="M4.500 8.500h14v14h-14zM4.500 8.500l5-5h14v14l-5 5M18.500 8.500l5-5"/><path d="M3 0v6M0 3h6" stroke-width="2"/></svg></button>
                    </div>
                    <div class="ml-[18px] mt-[10px] font-medium leading-[18px] text-white"><p>ユーザー・透視投影</p><p>(1) Collection | Cube</p></div>
                </div>
                <!-- Navigation gizmo -->
                <svg class="absolute right-[9px] top-[62px] h-[80px] w-[86px]" viewBox="0 0 86 80">
                    <circle cx="32" cy="26" r="7" fill="#523a40" stroke="#a03a4a"/>
                    <circle cx="16" cy="45" r="7.500" fill="#56692e" stroke="#7fb519" stroke-width="1.500"/>
                    <circle cx="45" cy="67" r="7" fill="#38495c" stroke="#2f68ad"/>
                    <path d="M45 39V10" stroke="#2c84e6" stroke-width="2"/><path d="M45 39l29-6" stroke="#6fa21c" stroke-width="2"/><path d="M45 39l13 13" stroke="#fb3552" stroke-width="2"/>
                    <circle cx="45" cy="10" r="8" fill="#2c84e6"/><circle cx="74" cy="33" r="8" fill="#6fa21c"/><circle cx="58" cy="52" r="8.500" fill="#fb3552"/>
                    <g fill="#141414" font-size="11" font-weight="600" text-anchor="middle" class="[text-shadow:none]"><text x="45" y="14">Z</text><text x="74" y="37">Y</text><text x="58" y="56">X</text></g>
                </svg>
                <div class="absolute right-[9px] top-[142px] flex flex-col gap-[3px] text-[#e8e8e8]">
                    <button class="flex size-[27px] items-center justify-center rounded-full bg-[#282828]/90" aria-label="ズーム"><svg class="size-4" viewBox="0 0 16 16"><circle cx="10" cy="6" r="6" fill="currentColor"/><path d="M6 10l-5 5" stroke="currentColor" stroke-width="2.500"/><path d="M10 3v6M7 6h6" stroke="#282828" stroke-width="1.400"/></svg></button>
                    <button class="flex size-[27px] items-center justify-center rounded-full bg-[#282828]/90" aria-label="移動"><svg class="size-[17px]" viewBox="0 0 16 16" fill="none" stroke="currentColor" stroke-width="1.900" stroke-linecap="round"><path d="M5 9L3.500 4M7.300 8V2M9.700 8V2M12 9l1-5M4.500 11L1.500 8.500"/><path d="M5 9h7l-1 4-2 2H7l-2.500-4z" fill="currentColor"/></svg></button>
                    <button class="flex size-[27px] items-center justify-center rounded-full bg-[#282828]/90" aria-label="カメラビュー"><svg class="size-[17px]"><use href="#i-camera"/></svg></button>
                    <button class="flex size-[27px] items-center justify-center rounded-full bg-[#282828]/90" aria-label="透視投影切替"><svg class="size-[17px]" viewBox="0 0 16 16" fill="none" stroke="currentColor" stroke-width="1.300"><path d="M3.500 2.500h9l2.500 11H1zM2.800 6h10.500M2 9.500h12M6.500 2.500l-1 11M9.500 2.500l1 11"/></svg></button>
                </div>
                <div class="absolute right-0 top-[65px] flex h-4 w-2 items-center rounded-l bg-[#303030]"><svg class="size-2 text-[#bbbbbb]"><use href="#i-left"/></svg></div>
            </section>
        </div>

        <!-- Node editor -->
        <section class="relative min-h-0 flex-1 overflow-hidden rounded-md bg-[#1d1d1d]">
            <svg class="absolute inset-0 h-full w-full" fill="none">
                <defs>
                    <pattern id="dots" x="93" y="41" width="106" height="106" patternUnits="userSpaceOnUse">
                        <path d="M22 1h2M43 1h2M65 1h2M86 1h2M1 22h2M22 22h2M43 22h2M65 22h2M86 22h2M1 43h2M22 43h2M43 43h2M65 43h2M86 43h2M1 65h2M22 65h2M43 65h2M65 65h2M86 65h2M1 86h2M22 86h2M43 86h2M65 86h2M86 86h2" stroke="#232323" stroke-width="2"/>
                        <path d="M1 1h2" stroke="#2b2b2b" stroke-width="2"/>
                    </pattern>
                </defs>
                <rect y="38" width="100%" height="390" fill="url(#dots)"/>
                <g stroke="#111111" stroke-width="4"><path d="M541 81C583 81 584 130 626 130"/><path d="M774 103C816 103 816 154 858 154"/><path d="M1006 127C1048 127 1049 80 1091 80"/></g>
                <g stroke="#00d6a3" stroke-width="2"><path d="M541 81C583 81 584 130 626 130"/><path d="M774 103C816 103 816 154 858 154"/><path d="M1006 127C1048 127 1049 80 1091 80"/></g>
            </svg>

            <div class="text-[12px]">
                <!-- Group input -->
                <article class="absolute left-[161px] top-[43px] w-[148px] rounded-[5px] bg-[#303030] pb-[5px] shadow-[0_2px_8px_2px_rgb(0_0_0/0.5)]">
                    <h3 class="flex h-[21px] items-center gap-[5px] rounded-t-[5px] border-b border-[#151515] bg-[#1d1d1d] pl-[10px]"><svg class="size-3"><use href="#i-fold"/></svg>グループ入力</h3>
                    <div class="relative mt-1 flex h-[23px] items-center justify-end pr-3">ジオメトリ<i class="absolute -right-[5px] size-[10px] rounded-full border border-black/60 bg-[#00d6a3]"></i></div>
                    <div class="relative flex h-[23px] items-center"><i class="absolute -right-[5px] size-[11px] rounded-full border border-[#8a8a8a] bg-[#303030]"></i></div>
                </article>

                <!-- Grid -->
                <article class="absolute left-[393px] top-11 w-[148px] rounded-[5px] bg-[#303030] pb-[5px] shadow-[0_2px_8px_2px_rgb(0_0_0/0.5)]">
                    <h3 class="flex h-[21px] items-center gap-[5px] rounded-t-[5px] border-b border-[#185443] bg-[#1d725e] pl-[10px]"><svg class="size-3"><use href="#i-fold"/></svg>グリッド</h3>
                    <div class="relative mt-1 flex h-[23px] items-center justify-end pr-3">メッシュ<i class="absolute -right-[5px] size-[10px] rounded-full border border-black/60 bg-[#00d6a3]"></i></div>
                    <div class="relative flex h-[23px] items-center justify-end pr-3">UVマップ<i class="absolute -right-1 size-2 rotate-45 bg-[#6363c7] outline outline-black/50"></i></div>
                    <div class="relative mt-1 flex h-[23px] items-center px-[11px]"><i class="absolute -left-[5px] size-[10px] rounded-full border border-black/60 bg-[#a1a1a1]"></i><label class="flex h-5 min-w-0 flex-1 items-center rounded border border-[#3d3d3d] bg-[#545454] px-[15px]"><span class="shrink-0">サイズX</span><input class="w-full min-w-0 flex-1 text-right outline-none" value="4 m"></label></div>
                    <div class="relative flex h-[23px] items-center px-[11px]"><i class="absolute -left-[5px] size-[10px] rounded-full border border-black/60 bg-[#a1a1a1]"></i><label class="flex h-5 min-w-0 flex-1 items-center rounded border border-[#3d3d3d] bg-[#545454] px-[15px]"><span class="shrink-0">サイズY</span><input class="w-full min-w-0 flex-1 text-right outline-none" value="3 m"></label></div>
                    <div class="relative flex h-[23px] items-center px-[11px]"><i class="absolute -left-[5px] size-[10px] rounded-full border border-black/60 bg-[#598c5c]"></i><label class="flex h-5 min-w-0 flex-1 items-center rounded border border-[#3d3d3d] bg-[#545454] px-[15px]"><span class="shrink-0">頂点 X</span><input class="w-full min-w-0 flex-1 text-right outline-none" value="5"></label></div>
                    <div class="relative flex h-[23px] items-center px-[11px]"><i class="absolute -left-[5px] size-[10px] rounded-full border border-black/60 bg-[#598c5c]"></i><label class="flex h-5 min-w-0 flex-1 items-center rounded border border-[#3d3d3d] bg-[#545454] px-[15px]"><span class="shrink-0">頂点 Y</span><input class="w-full min-w-0 flex-1 text-right outline-none" value="4"></label></div>
                </article>

                <!-- Subdivide mesh -->
                <article class="absolute left-[626px] top-[66px] w-[148px] rounded-[5px] bg-[#303030] pb-1 shadow-[0_2px_8px_2px_rgb(0_0_0/0.5)]">
                    <h3 class="flex h-[21px] items-center gap-[5px] rounded-t-[5px] border-b border-[#185443] bg-[#1d725e] pl-[10px]"><svg class="size-3"><use href="#i-fold"/></svg>メッシュ細分化</h3>
                    <div class="relative mt-1 flex h-[23px] items-center justify-end pr-3">メッシュ<i class="absolute -right-[5px] size-[10px] rounded-full border border-black/60 bg-[#00d6a3]"></i></div>
                    <div class="relative mt-1 flex h-[23px] items-center pl-3">メッシュ<i class="absolute -left-[5px] size-[10px] rounded-full border border-black/60 bg-[#00d6a3]"></i></div>
                    <div class="relative flex h-[23px] items-center px-[11px]"><i class="absolute -left-[5px] size-[10px] rounded-full border border-black/60 bg-[#598c5c]"></i><label class="flex h-5 min-w-0 flex-1 items-center rounded border border-[#3d3d3d] bg-[#545454] px-[15px]"><span class="shrink-0">レベル</span><input class="w-full min-w-0 flex-1 text-right outline-none" value="6"></label></div>
                </article>

                <!-- Image texture -->
                <article class="absolute left-[578px] top-[201px] w-[254px] rounded-[5px] bg-[#303030] pb-1 shadow-[0_2px_8px_2px_rgb(0_0_0/0.5)]">
                    <h3 class="flex h-[21px] items-center gap-[5px] rounded-t-[5px] border-b border-[#5a3416] bg-[#79461d] pl-[10px]"><svg class="size-3"><use href="#i-fold"/></svg>画像テクスチャ</h3>
                    <div class="relative mt-1 flex h-[23px] items-center justify-end pr-3">カラー<i class="absolute -right-1 size-2 rotate-45 bg-[#c7c729] outline outline-black/50"></i></div>
                    <div class="relative flex h-[23px] items-center justify-end pr-3">アルファ<i class="absolute -right-1 size-2 rotate-45 bg-[#a1a1a1] outline outline-black/50"></i></div>
                    <div class="relative mx-[11px] mt-2 h-5 rounded border border-[#3d3d3d] bg-[#282828]">
                        <select class="block h-full w-full appearance-none px-[7px] outline-none" aria-label="補間"><option>リニア</option></select>
                        <svg class="pointer-events-none absolute right-[2px] top-1 size-[10px]"><use href="#i-chev"/></svg>
                    </div>
                    <div class="relative mx-[11px] mt-[6px] h-5 rounded border border-[#3d3d3d] bg-[#282828]">
                        <select class="block h-full w-full appearance-none px-[7px] outline-none" aria-label="延長"><option>リピート</option></select>
                        <svg class="pointer-events-none absolute right-[2px] top-1 size-[10px]"><use href="#i-chev"/></svg>
                    </div>
                    <div class="relative mt-[3px] flex h-5 items-center px-[11px]">
                        <i class="absolute -left-[5px] size-[10px] rounded-full border border-black/60 bg-[#633863]"></i>
                        <div class="flex h-5 flex-1 overflow-hidden rounded border border-[#3d3d3d] bg-[#282828]">
                            <button class="flex w-[31px] items-center justify-center" aria-label="画像を参照"><svg class="size-4"><use href="#i-image"/></svg><svg class="size-[10px]"><use href="#i-chev"/></svg></button>
                            <button class="flex w-[99px] items-center bg-[#545454] pl-1"><svg class="size-4"><use href="#i-plus"/></svg><span class="flex-1 text-center">新規</span></button>
                            <button class="flex flex-1 items-center border-l border-[#3d3d3d] bg-[#545454] pl-1"><svg class="size-[17px]"><use href="#i-folder"/></svg><span class="flex-1 pr-1 text-center">開く</span></button>
                        </div>
                    </div>
                    <div class="relative mt-[2px] flex h-[23px] items-center pl-3">ベクトル<i class="absolute -left-1 size-2 rotate-45 bg-[#6363c7] outline outline-black/50"></i></div>
                    <div class="relative flex h-[23px] items-center px-[11px]"><i class="absolute -left-[5px] size-[10px] rounded-full border border-black/60 bg-[#598c5c]"></i><label class="flex h-5 min-w-0 flex-1 items-center rounded border border-[#3d3d3d] bg-[#545454] px-[15px]"><span class="shrink-0">フレーム</span><input class="w-full min-w-0 flex-1 text-right outline-none" value="0"></label></div>
                </article>

                <!-- Set position -->
                <article class="absolute left-[858px] top-[90px] w-[148px] rounded-[5px] bg-[#303030] pb-[6px] shadow-[0_2px_8px_2px_rgb(0_0_0/0.5)]">
                    <h3 class="flex h-[21px] items-center gap-[5px] rounded-t-[5px] border-b border-[#185443] bg-[#1d725e] pl-[10px]"><svg class="size-3"><use href="#i-fold"/></svg>位置設定</h3>
                    <div class="relative mt-1 flex h-[23px] items-center justify-end pr-3">ジオメトリ<i class="absolute -right-[5px] size-[10px] rounded-full border border-black/60 bg-[#00d6a3]"></i></div>
                    <div class="relative mt-[3px] flex h-[23px] items-center pl-3">ジオメトリ<i class="absolute -left-[5px] size-[10px] rounded-full border border-black/60 bg-[#00d6a3]"></i></div>
                    <div class="relative flex h-[23px] items-center pl-3">選択<i class="absolute -left-1 flex size-2 rotate-45 items-center justify-center bg-[#cca6d6] outline outline-black/50"><b class="size-[3px] rounded-full bg-[#111111]"></b></i></div>
                    <div class="relative flex h-[23px] items-center pl-3">位置<i class="absolute -left-1 size-2 rotate-45 bg-[#6363c7] outline outline-black/50"></i></div>
                    <div class="relative flex h-[23px] items-center pl-3">オフセット:<i class="absolute -left-1 flex size-2 rotate-45 items-center justify-center bg-[#6363c7] outline outline-black/50"><b class="size-[3px] rounded-full bg-[#111111]"></b></i></div>
                    <div class="mx-[11px] flex flex-col gap-px overflow-hidden rounded border border-[#3d3d3d] bg-[#3d3d3d]">
                        <label class="flex h-[19px] items-center bg-[#545454] px-[15px]"><span>X</span><input class="min-w-0 flex-1 text-right outline-none" value="0 m"></label>
                        <label class="flex h-5 items-center bg-[#545454] px-[15px]"><span>Y</span><input class="min-w-0 flex-1 text-right outline-none" value="0 m"></label>
                        <label class="flex h-5 items-center bg-[#545454] px-[15px]"><span>Z</span><input class="min-w-0 flex-1 text-right outline-none" value="0 m"></label>
                    </div>
                </article>

                <!-- Group output -->
                <article class="absolute left-[1091px] top-[43px] w-[148px] rounded-[5px] bg-[#303030] pb-[5px] shadow-[0_2px_8px_2px_rgb(0_0_0/0.5)]">
                    <h3 class="flex h-[21px] items-center gap-[5px] rounded-t-[5px] border-b border-[#151515] bg-[#1d1d1d] pl-[10px]"><svg class="size-3"><use href="#i-fold"/></svg>グループ出力</h3>
                    <div class="relative mt-1 flex h-[23px] items-center pl-3">ジオメトリ<i class="absolute -left-[5px] size-[10px] rounded-full border border-black/60 bg-[#00d6a3]"></i></div>
                    <div class="relative flex h-[23px] items-center"><i class="absolute -left-[6px] size-[11px] rounded-full border border-[#8a8a8a] bg-[#303030]"></i></div>
                </article>

                <!-- Highlight frames -->
                <div class="pointer-events-none absolute left-[562px] top-[187px] h-[237px] w-[288px] border-[6px] border-[#ff0000]"></div>
                <div class="pointer-events-none absolute left-[714px] top-[322px] h-[33px] w-[113px] border-[5px] border-[#ff0000]"></div>
            </div>

            <div class="relative flex h-[26px] items-center whitespace-nowrap pl-[7px] pr-2">
                <button class="flex h-5 w-[31px] items-center justify-center rounded border border-[#3d3d3d] bg-[#282828]" aria-label="エディタータイプ"><svg class="size-4"><use href="#i-nodes"/></svg><svg class="size-[10px]"><use href="#i-chev"/></svg></button>
                <div class="relative ml-[6px] h-5 w-[123px] rounded border border-[#3d3d3d] bg-[#282828]">
                    <select class="block h-full w-full appearance-none px-[7px] outline-none" aria-label="ジオメトリノードタイプ"><option>モディファイアー</option></select>
                    <svg class="pointer-events-none absolute right-px top-1 size-[10px]"><use href="#i-chev"/></svg>
                </div>
                <nav class="ml-3 flex gap-[15px]"><button>ビュー</button><button>選択</button><button>追加</button><button>ノード</button></nav>
                <span class="flex-1"></span>
                <div class="flex h-5 w-[212px] overflow-hidden rounded border border-[#3d3d3d] bg-[#1d1d1d]">
                    <button class="flex w-[31px] shrink-0 items-center justify-center border-r border-[#3d3d3d] bg-[#282828]" aria-label="ノードツリー"><svg class="size-4"><use href="#i-nodetree"/></svg><svg class="size-[10px]"><use href="#i-chev"/></svg></button>
                    <input class="min-w-0 flex-1 px-[7px] outline-none" value="ジオメトリノード" aria-label="ノードツリー名">
                    <button class="flex w-5 shrink-0 items-center justify-center bg-[#545454] text-[#aaaaaa]" aria-label="フェイクユーザー"><svg class="size-[15px]"><use href="#i-shield"/></svg></button>
                    <button class="flex w-5 shrink-0 items-center justify-center border-l border-[#3d3d3d] bg-[#545454]" aria-label="複製"><svg class="size-4"><use href="#i-copy"/></svg></button>
                    <button class="flex w-5 shrink-0 items-center justify-center border-l border-[#3d3d3d] bg-[#545454]" aria-label="リンク解除"><svg class="size-4"><use href="#i-close"/></svg></button>
                </div>
                <button class="ml-2 text-[#999999]" aria-label="ピン"><svg class="size-4"><use href="#i-pin"/></svg></button>
                <span class="flex-[2]"></span>
                <button class="flex h-5 w-5 items-center justify-center rounded border border-[#303030] bg-[#303030] text-[#666666]" aria-label="親ツリーへ"><svg class="size-4"><use href="#i-parent"/></svg></button>
                <div class="ml-[5px] flex h-5 w-[52px] overflow-hidden rounded border border-[#3d3d3d] bg-[#282828]">
                    <button class="flex w-[19px] items-center justify-center bg-[#545454] text-[#aaaaaa]" aria-label="スナップ"><svg class="size-4"><use href="#i-magnet"/></svg></button>
                    <button class="flex flex-1 items-center justify-center" aria-label="スナップ対象"><svg class="size-4"><use href="#i-snapgrid"/></svg><svg class="size-[10px]"><use href="#i-chev"/></svg></button>
                </div>
                <div class="ml-[5px] flex h-5 w-10 overflow-hidden rounded border border-[#3d3d3d] bg-[#282828]">
                    <button class="flex w-[19px] items-center justify-center bg-[#4772b3] text-white" aria-label="オーバーレイ"><svg class="size-4"><use href="#i-overlay"/></svg></button>
                    <button class="flex flex-1 items-center justify-center" aria-label="オーバーレイ設定"><svg class="size-[10px]"><use href="#i-chev"/></svg></button>
                </div>
            </div>
            <div class="relative mt-3 flex h-[18px] items-center pl-[17px]">
                <svg class="size-4"><use href="#i-object"/></svg><span class="ml-2">Cube</span>
                <svg class="ml-[15px] size-[10px]"><use href="#i-right"/></svg>
                <svg class="ml-2 size-4"><use href="#i-nodes"/></svg><span class="ml-[6px]">ジオメトリノード</span>
                <svg class="ml-[14px] size-[10px]"><use href="#i-right"/></svg>
                <svg class="ml-2 size-4"><use href="#i-nodetree"/></svg><span class="ml-[6px]">ジオメトリノード</span>
            </div>
            <div class="absolute left-0 top-[39px] flex h-4 w-[6px] items-center"><svg class="size-2 text-[#bbbbbb]"><use href="#i-right"/></svg></div>
            <div class="absolute bottom-3 right-[2px] top-[35px] w-[3px] rounded bg-[#303030]"></div>
            <div class="absolute right-0 top-[39px] flex h-4 w-[9px] items-center rounded-l bg-[#1a1a1a]"><svg class="size-2 text-[#bbbbbb]"><use href="#i-left"/></svg></div>
            <div class="absolute bottom-[3px] left-2 right-[9px] h-[3px] rounded bg-[#303030]"></div>
        </section>

        <!-- Timeline -->
        <section class="relative flex h-[72px] shrink-0 flex-col overflow-hidden rounded-md bg-[#303030]">
            <div class="flex h-6 items-center whitespace-nowrap pl-[7px] pr-2">
                <button class="flex h-5 w-[31px] items-center justify-center rounded border border-[#3d3d3d] bg-[#282828]" aria-label="エディタータイプ"><svg class="size-4"><use href="#i-clock"/></svg><svg class="size-[10px]"><use href="#i-chev"/></svg></button>
                <div class="ml-[6px] flex h-5 rounded border border-[#3d3d3d] bg-[#282828]">
                    <button class="flex w-[45px] items-center justify-between pl-[7px]">再生<svg class="size-[10px]"><use href="#i-chev"/></svg></button>
                    <button class="flex w-[79px] items-center justify-between border-l border-[#3d3d3d] pl-[7px]">キーイング<svg class="size-[10px]"><use href="#i-chev"/></svg></button>
                </div>
                <nav class="ml-[10px] flex gap-[15px]"><button>ビュー</button><button>マーカー</button></nav>
                <span class="flex-1"></span>
                <div class="flex h-5 w-10 overflow-hidden rounded border border-[#3d3d3d]">
                    <button class="flex w-[19px] items-center justify-center bg-[#545454]" aria-label="自動キー"><svg class="size-4"><use href="#i-dot"/></svg></button>
                    <button class="flex flex-1 items-center justify-center text-[#555555]" aria-label="自動キー設定"><svg class="size-[10px]"><use href="#i-chev"/></svg></button>
                </div>
                <div class="ml-[5px] mr-[14px] flex h-5 w-[120px] divide-x divide-[#3d3d3d] overflow-hidden rounded border border-[#3d3d3d] bg-[#545454]">
                    <button class="flex flex-1 items-center justify-center" aria-label="先頭へ"><svg class="size-4"><use href="#i-first"/></svg></button>
                    <button class="flex flex-1 items-center justify-center" aria-label="前のキー"><svg class="size-4"><use href="#i-prevkey"/></svg></button>
                    <button class="flex flex-1 items-center justify-center" aria-label="逆再生"><svg class="size-[14px]"><use href="#i-rev"/></svg></button>
                    <button class="flex flex-1 items-center justify-center" aria-label="再生"><svg class="size-[14px] rotate-180"><use href="#i-rev"/></svg></button>
                    <button class="flex flex-1 items-center justify-center" aria-label="次のキー"><svg class="size-4 rotate-180"><use href="#i-prevkey"/></svg></button>
                    <button class="flex flex-1 items-center justify-center" aria-label="末尾へ"><svg class="size-4 rotate-180"><use href="#i-first"/></svg></button>
                </div>
                <span class="flex-1"></span>
                <input class="h-5 w-[74px] rounded border border-[#3d3d3d] bg-[#545454] text-center outline-none" value="1" aria-label="現在のフレーム">
                <div class="ml-[6px] flex h-5 w-[193px] divide-x divide-[#3d3d3d] overflow-hidden rounded border border-[#3d3d3d] bg-[#545454]">
                    <button class="flex w-5 shrink-0 items-center justify-center" aria-label="プレビュー範囲"><svg class="size-4"><use href="#i-timer"/></svg></button>
                    <label class="flex min-w-0 flex-1 items-center px-[14px]"><span class="shrink-0">開始</span><input class="w-full min-w-0 flex-1 text-right outline-none" value="1"></label>
                    <label class="flex min-w-0 flex-1 items-center px-[14px]"><span class="shrink-0">終了</span><input class="w-full min-w-0 flex-1 text-right outline-none" value="250"></label>
                </div>
            </div>
            <div id="ruler" class="flex h-6 items-center bg-[#1d1d1d] pl-[70px] pr-[26px] text-center text-[#a8a8a8]"></div>
            <div class="flex flex-1 bg-[#222222] pl-[45px] pr-[51px]"><div id="ticks" class="flex flex-1 border-r border-[#161616] bg-[#303030]"></div></div>
            <div class="absolute bottom-0 left-[50px] h-7 w-[2px] bg-[#4772b3]"></div>
            <div class="absolute left-[39px] top-[27px] flex h-[18px] w-6 items-center justify-center rounded bg-[#4772b3] text-white">1</div>
            <div class="absolute bottom-[3px] left-2 right-2 flex h-2 items-center justify-between rounded-full bg-[#545454] px-px"><span class="h-[6px] w-[5px] rounded-full bg-[#222222]"></span><span class="h-[6px] w-[5px] rounded-full bg-[#222222]"></span></div>
            <svg class="absolute left-0 top-10 size-2 text-[#999999]"><use href="#i-right"/></svg>
            <svg class="absolute right-0 top-10 size-2 text-[#999999]"><use href="#i-left"/></svg>
        </section>
    </div>

    <div class="flex w-[289px] shrink-0 flex-col gap-1">
        <!-- Outliner -->
        <section class="h-[268px] shrink-0 overflow-hidden rounded-md bg-[#282828] text-[#c3c3c3]">
            <div class="flex h-[26px] items-center pl-[7px] pr-[7px] text-[#e0e0e0]">
                <button class="flex h-5 w-8 items-center justify-center rounded border border-[#3d3d3d] bg-[#282828]" aria-label="エディタータイプ"><svg class="size-4"><use href="#i-tree"/></svg><svg class="size-[10px]"><use href="#i-chev"/></svg></button>
                <button class="ml-[5px] flex h-5 w-8 items-center justify-center rounded border border-[#3d3d3d] bg-[#282828]" aria-label="表示モード"><svg class="size-4"><use href="#i-layers"/></svg><svg class="size-[10px]"><use href="#i-chev"/></svg></button>
                <label class="ml-4 flex h-5 w-[116px] items-center rounded border border-[#3d3d3d] bg-[#1d1d1d] pl-1"><svg class="size-4 shrink-0"><use href="#i-search"/></svg><input type="search" class="w-full min-w-0 outline-none" aria-label="検索"></label>
                <button class="ml-auto flex h-5 w-8 items-center justify-center rounded border border-[#3d3d3d] bg-[#282828]" aria-label="フィルター"><svg class="size-4"><use href="#i-funnel"/></svg><svg class="size-[10px]"><use href="#i-chev"/></svg></button>
                <button class="ml-[5px] flex h-5 w-5 items-center justify-center rounded border border-[#3d3d3d] bg-[#545454]" aria-label="新規コレクション"><svg class="size-4"><use href="#i-newcol"/></svg></button>
            </div>
            <div class="flex h-5 items-center pl-[22px]"><svg class="size-4 text-[#e0e0e0]"><use href="#i-box"/></svg><span class="ml-[6px] pt-px">シーンコレクション</span></div>
            <div class="flex h-5 items-center bg-[#2b2b2b] pl-[26px] pr-3">
                <svg class="size-2" viewBox="0 0 8 8"><path d="M1 1h6L4 7z" fill="currentColor"/></svg>
                <span class="ml-[6px] flex size-5 items-center justify-center rounded border border-[#6a6a6a] bg-[#545454] text-white"><svg class="size-[14px]"><use href="#i-box"/></svg></span>
                <span class="ml-1 pt-px">Collection</span>
                <span class="relative ml-auto flex">
                    <input type="checkbox" checked aria-label="ビューレイヤーから除外" class="size-[11px] appearance-none rounded-[1px] bg-[#e0e0e0]">
                    <svg class="pointer-events-none absolute inset-0 size-[11px]" viewBox="0 0 11 11"><path d="M2.500 5.500L4.800 8l4-5" fill="none" stroke="#222222" stroke-width="1.800"/></svg>
                </span>
                <svg class="ml-[7px] size-[14px] text-[#e0e0e0]"><use href="#i-eye"/></svg><svg class="ml-[6px] size-[14px] text-[#e0e0e0]"><use href="#i-render"/></svg>
            </div>
            <div class="relative">
                <div class="absolute bottom-[5px] left-[29px] top-[5px] z-10 w-px bg-[#666666]"></div>
                <div class="flex h-5 items-center pl-[46px] pr-3">
                    <svg class="size-2" viewBox="0 0 8 8"><path d="M1 1v6l6-3z" fill="currentColor"/></svg>
                    <svg class="ml-2 size-4 text-[#c8824b]"><use href="#i-camera"/></svg><span class="ml-[6px] pt-px">Camera</span>
                    <span class="ml-5 flex size-5 items-center justify-center rounded border border-[#6a6a6a] bg-[#545454] text-[#1cb88e]"><svg class="size-4"><use href="#i-cameraline"/></svg></span>
                    <svg class="ml-auto size-[14px] text-[#e0e0e0]"><use href="#i-eye"/></svg><svg class="ml-[6px] size-[14px] text-[#e0e0e0]"><use href="#i-render"/></svg>
                </div>
                <div class="flex h-5 items-center bg-[#334d80] pl-[46px] pr-3">
                    <svg class="size-2" viewBox="0 0 8 8"><path d="M1 1v6l6-3z" fill="currentColor"/></svg>
                    <span class="ml-[6px] flex size-5 items-center justify-center rounded border border-[#7a8ba8] bg-[#5d719a] text-[#d98f5c]"><svg class="size-4"><use href="#i-cubeobj"/></svg></span><span class="ml-1 pt-px text-[#f0a030]">Cube</span>
                    <svg class="ml-[22px] size-[15px] text-[#6b93e8]"><use href="#i-wrench"/></svg><svg class="ml-[5px] size-4 text-[#0cc09a]"><use href="#i-mesh"/></svg>
                    <svg class="ml-auto size-[14px] text-[#e0e0e0]"><use href="#i-eye"/></svg><svg class="ml-[6px] size-[14px] text-[#e0e0e0]"><use href="#i-render"/></svg>
                </div>
                <div class="flex h-5 items-center pl-[46px] pr-3">
                    <svg class="size-2" viewBox="0 0 8 8"><path d="M1 1v6l6-3z" fill="currentColor"/></svg>
                    <svg class="ml-2 size-4 text-[#c8824b]"><use href="#i-bulb"/></svg><span class="ml-[6px] pt-px">Light</span>
                    <svg class="ml-[22px] size-4 text-[#1cb88e]"><use href="#i-lightdata"/></svg>
                    <svg class="ml-auto size-[14px] text-[#e0e0e0]"><use href="#i-eye"/></svg><svg class="ml-[6px] size-[14px] text-[#e0e0e0]"><use href="#i-render"/></svg>
                </div>
            </div>
            <div class="h-5 bg-[#2b2b2b]"></div><div class="h-5"></div><div class="h-5 bg-[#2b2b2b]"></div><div class="h-5"></div><div class="h-5 bg-[#2b2b2b]"></div><div class="h-5"></div><div class="h-5 bg-[#2b2b2b]"></div>
        </section>

        <!-- Properties -->
        <section class="flex min-h-0 flex-1 flex-col overflow-hidden rounded-md bg-[#303030]">
            <div class="flex h-6 shrink-0 items-center justify-between pl-[9px] pr-[7px]">
                <button class="flex h-5 w-8 items-center justify-center rounded border border-[#3d3d3d] bg-[#282828]" aria-label="エディタータイプ"><svg class="size-4"><use href="#i-props"/></svg><svg class="size-[10px]"><use href="#i-chev"/></svg></button>
                <label class="mr-[18px] flex h-5 w-[116px] items-center rounded border border-[#3d3d3d] bg-[#1d1d1d] pl-1"><svg class="size-4 shrink-0"><use href="#i-search"/></svg><input type="search" class="w-full min-w-0 outline-none" aria-label="検索"></label>
                <button class="flex h-5 w-5 items-center justify-center rounded border border-[#3d3d3d] bg-[#282828]" aria-label="オプション"><svg class="size-[10px]"><use href="#i-chev"/></svg></button>
            </div>
            <div class="flex min-h-0 flex-1">
                <div class="flex w-7 shrink-0 flex-col bg-[#1d1d1d] pl-[2px] pt-2 text-[#b5b5b5]">
                    <button class="flex h-7 shrink-0 items-center justify-center" aria-label="ツール"><svg class="size-4"><use href="#i-tool"/></svg></button>
                    <button class="mt-2 flex h-7 shrink-0 items-center justify-center" aria-label="レンダー"><svg class="size-4"><use href="#i-back"/></svg></button>
                    <button class="flex h-7 shrink-0 items-center justify-center" aria-label="出力"><svg class="size-4"><use href="#i-printer"/></svg></button>
                    <button class="flex h-7 shrink-0 items-center justify-center" aria-label="ビューレイヤー"><svg class="size-4"><use href="#i-layers"/></svg></button>
                    <button class="flex h-7 shrink-0 items-center justify-center" aria-label="シーン"><svg class="size-4"><use href="#i-scene"/></svg></button>
                    <button class="flex h-7 shrink-0 items-center justify-center text-[#b5545c]" aria-label="ワールド"><svg class="size-4"><use href="#i-world"/></svg></button>
                    <button class="mt-2 flex h-7 shrink-0 items-center justify-center text-[#e0e0e0]" aria-label="コレクション"><svg class="size-4"><use href="#i-boxline"/></svg></button>
                    <button class="mt-2 flex h-7 shrink-0 items-center justify-center text-[#c8824b]" aria-label="オブジェクト"><svg class="size-4"><use href="#i-object"/></svg></button>
                    <button class="flex h-7 shrink-0 items-center justify-center rounded-l bg-[#303030] text-[#6b9bff]" aria-label="モディファイアー"><svg class="size-4"><use href="#i-wrenchfill"/></svg></button>
                    <button class="flex h-7 shrink-0 items-center justify-center text-[#5680cf]" aria-label="パーティクル"><svg class="size-4"><use href="#i-particle"/></svg></button>
                    <button class="flex h-7 shrink-0 items-center justify-center text-[#5680cf]" aria-label="物理演算"><svg class="size-4"><use href="#i-physics"/></svg></button>
                    <button class="flex h-7 shrink-0 items-center justify-center text-[#5680cf]" aria-label="コンストレイント"><svg class="size-4"><use href="#i-constraint"/></svg></button>
                    <button class="flex h-7 shrink-0 items-center justify-center text-[#0cb38d]" aria-label="データ"><svg class="size-4"><use href="#i-mesh"/></svg></button>
                    <button class="flex h-7 shrink-0 items-center justify-center text-[#b5545c]" aria-label="マテリアル"><svg class="size-4"><use href="#i-material"/></svg></button>
                    <button class="mt-2 flex h-7 shrink-0 items-center justify-center text-[#b5545c]" aria-label="テクスチャ"><svg class="size-4"><use href="#i-texture"/></svg></button>
                </div>
                <div class="min-w-0 flex-1 pl-2 pr-2">
                    <div class="flex h-9 items-center pl-[2px] pt-px">
                        <svg class="size-4"><use href="#i-object"/></svg><span class="ml-2">Cube</span>
                        <svg class="ml-3 size-[10px]"><use href="#i-right"/></svg>
                        <svg class="ml-[10px] size-4"><use href="#i-nodes"/></svg><span class="ml-[6px]">ジオメトリノード</span>
                        <button class="ml-auto text-[#999999]" aria-label="ピン"><svg class="size-4"><use href="#i-pin"/></svg></button>
                    </div>
                    <button class="mt-[9px] flex h-5 w-full items-center rounded border border-[#3d3d3d] bg-[#545454] pl-1"><svg class="size-4"><use href="#i-plus"/></svg><span class="flex-1 pr-1 text-center">モディファイアーを追加</span></button>
                    <div class="mt-[10px] h-[111px] rounded border border-[#4772b3] bg-[#3d3d3d] pl-[6px] pr-2">
                        <div class="flex h-6 items-center">
                            <svg class="size-3 text-[#aaaaaa]"><use href="#i-fold"/></svg>
                            <svg class="ml-[3px] size-4"><use href="#i-nodes"/></svg>
                            <div class="ml-[11px] flex h-[19px] overflow-hidden rounded bg-[#1d1d1d]">
                                <input class="w-[46px] pl-[7px] outline-none" value="ジオ..." aria-label="モディファイアー名">
                                <button class="flex w-5 items-center justify-center border-r border-[#3d3d3d] bg-[#545454]" aria-label="ケージ"><svg class="size-4"><use href="#i-mesh"/></svg></button>
                                <button class="flex w-5 items-center justify-center border-r border-[#3d3d3d] bg-[#4772b3]" aria-label="編集モード"><svg class="size-4"><use href="#i-editmode"/></svg></button>
                                <button class="flex w-5 items-center justify-center border-r border-[#3d3d3d] bg-[#4772b3] text-white" aria-label="ビューポート"><svg class="size-[15px]"><use href="#i-screen"/></svg></button>
                                <button class="flex w-5 items-center justify-center bg-[#4772b3] text-white" aria-label="レンダー表示"><svg class="size-[15px]"><use href="#i-render"/></svg></button>
                                <button class="flex w-5 items-center justify-center bg-[#282828]" aria-label="その他"><svg class="size-3"><use href="#i-fold"/></svg></button>
                            </div>
                            <button class="ml-[3px]" aria-label="削除"><svg class="size-4"><use href="#i-close"/></svg></button>
                            <svg class="ml-auto h-[6px] w-3 text-[#888888]" viewBox="0 0 12 6"><path d="M0 1h12M0 4h12" stroke="currentColor" stroke-dasharray="1 2"/></svg>
                        </div>
                        <div class="ml-[2px] mt-2 flex h-[19px] overflow-hidden rounded bg-[#1d1d1d]">
                            <button class="flex w-[31px] items-center justify-center border-r border-[#3d3d3d] bg-[#282828]" aria-label="ノードグループ"><svg class="size-4"><use href="#i-nodetree"/></svg><svg class="size-[10px]"><use href="#i-chev"/></svg></button>
                            <input class="min-w-0 flex-1 px-[7px] outline-none" value="ジオメトリノード" aria-label="ノードグループ名">
                            <button class="flex w-5 items-center justify-center bg-[#545454] text-[#aaaaaa]" aria-label="フェイクユーザー"><svg class="size-[15px]"><use href="#i-shield"/></svg></button>
                            <button class="flex w-5 items-center justify-center border-l border-[#3d3d3d] bg-[#545454]" aria-label="複製"><svg class="size-4"><use href="#i-copy"/></svg></button>
                            <button class="flex w-5 items-center justify-center border-l border-[#3d3d3d] bg-[#545454]" aria-label="リンク解除"><svg class="size-4"><use href="#i-close"/></svg></button>
                        </div>
                        <button class="mt-[9px] flex h-[25px] items-center gap-1 pl-[15px]"><svg class="size-[10px] text-[#aaaaaa]"><use href="#i-right"/></svg>出力属性</button>
                        <button class="flex h-[25px] items-center gap-1 pl-[15px]"><svg class="size-[10px] text-[#aaaaaa]"><use href="#i-right"/></svg>内部依存</button>
                    </div>
                </div>
            </div>
        </section>
    </div>
</main>

<!-- Status bar -->
<footer class="flex h-5 shrink-0 items-center whitespace-nowrap pl-[9px] pr-3 text-[#999999]">
    <div class="flex w-[211px] items-center"><svg class="size-4"><use href="#i-mouse-l"/></svg><span class="ml-[9px]">選択</span></div>
    <div class="flex w-[211px] items-center"><svg class="size-4"><use href="#i-mouse-m"/></svg><span class="ml-[9px]">ビューを回転</span></div>
    <div class="flex items-center"><svg class="size-4 -scale-x-100"><use href="#i-mouse-l"/></svg><span class="ml-[9px]">オブジェクト</span></div>
    <p class="ml-auto">Collection | Cube | 頂点:49,601 | 面:49,152 | 三角面:98,304 | オブジェクト:1/3 | 期間:&nbsp;&nbsp; 00:10+10 (フレーム 1/250) | 4.0.2</p>
</footer>

<script>
    // Spreadsheet rows: four points per column of the grid
    const rows = document.getElementById("rows");
    for (let i = 0; i < 19; i++) {
        const x = (Math.floor(i / 4) - 2).toFixed(3);
        const y = ((i % 4) - 1.5).toFixed(3);
        rows.innerHTML += `<tr class="h-5 odd:bg-[#282828] even:bg-[#2b2b2b]">
            <th class="border-r border-[#1a1a1a] bg-white/5 pr-1 font-normal">${i}</th>
            <td class="pr-[3px]">${x}</td><td class="pr-1">${y}</td><td class="border-r border-[#1a1a1a] pr-[5px]">0.000</td><td></td></tr>`;
    }

    // Timeline labels and ticks
    const ruler = document.getElementById("ruler");
    const ticks = document.getElementById("ticks");
    for (let f = 10; f <= 250; f += 10) {
        ruler.innerHTML += `<span class="w-0 flex-1">${f}</span>`;
        ticks.innerHTML += `<span class="flex-1 border-l border-[#161616]"></span><span class="flex-1 border-l border-[#262626]"></span>`;
    }

    // Floor grid in perspective, seen from the viewport camera
    const depth = (x, y) => 1 - 0.1145 * x + 0.0514 * y;
    const project = (x, y) => {
        const w = depth(x, y);
        return `${((32.4 * x + 71.8 * y) / w).toFixed(1)} ${((31.85 * x - 15.4 * y) / w).toFixed(1)}`;
    };
    const near = 0.2;
    const alongY = (x) => `M${project(x, Math.max(-90, (near - 1 + 0.1145 * x) / 0.0514))}L${project(x, 90)}`;
    const alongX = (y) => `M${project(-90, y)}L${project(Math.min(90, (1 - near + 0.0514 * y) / 0.1145), y)}`;
    let minor = "", major = "";
    for (let k = -60; k <= 60; k++) {
        if (k === 0) continue;
        const d = (k <= 6 ? alongY(k) : "") + (depth(-90, k) > near ? alongX(k) : "");
        if (k % 10) minor += d; else major += d;
    }
    document.getElementById("minor").setAttribute("d", minor);
    document.getElementById("major").setAttribute("d", major);
    document.getElementById("axisX").setAttribute("d", alongX(0));
    document.getElementById("axisY").setAttribute("d", alongY(0));
    document.getElementById("plane").setAttribute("d",
        `M${project(-2, -1.5)}L${project(-2, 1.5)}L${project(2, 1.5)}L${project(2, -1.5)}z`);
</script>
</body>
</html>
